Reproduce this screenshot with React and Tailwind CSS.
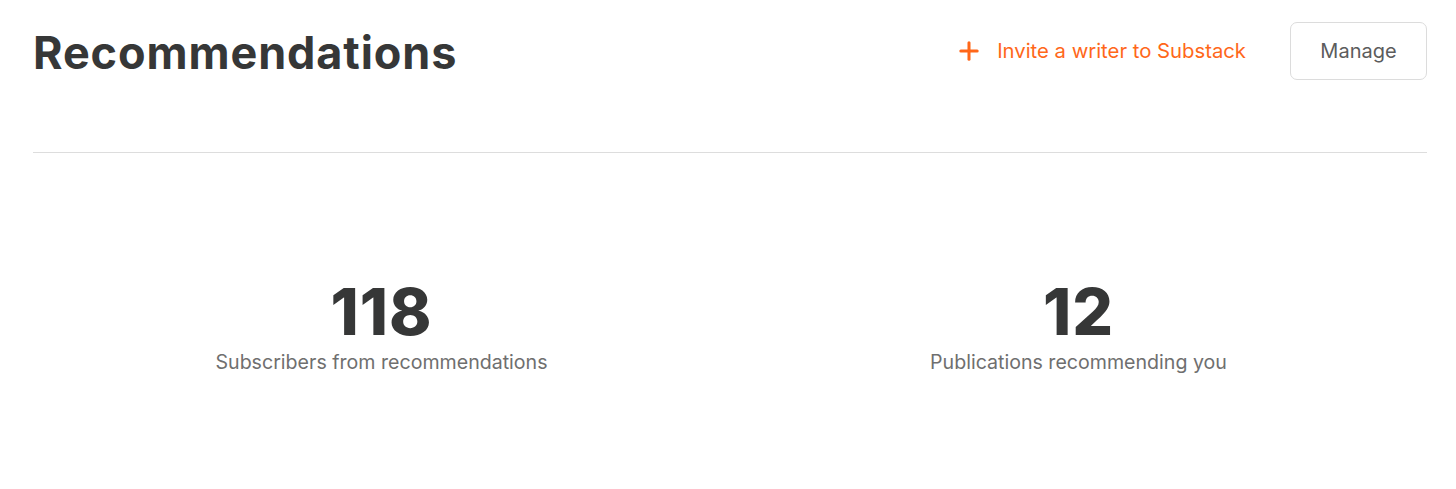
import { Plus } from 'lucide-react'

function Stat({ value, label }) {
  return (
    <div className="flex flex-col items-center">
      <div className="text-[64px] font-extrabold leading-[72px] tracking-[1px] text-[#363737]">{value}</div>
      <div className="mt-[1px] text-[19.6px] leading-[26px] text-[#6f6f6f]">{label}</div>
    </div>
  )
}

export default function App() {
  return (
    <div className="min-h-[489px] bg-white pl-[33px] pr-[29px] pt-[22px] font-['Inter',sans-serif] text-[#363737]">
      <div className="flex items-start justify-between">
        <h1 className="text-[45px] font-bold leading-[62px] tracking-[0.9px]">Recommendations</h1>
        <div className="flex items-center">
          <button className="flex items-center text-[20.3px] text-[#ff6719]">
            <Plus size={28} strokeWidth={2.6} className="mr-[14px]" />
            Invite a writer to Substack
          </button>
          <button className="ml-[44px] h-[58px] w-[137px] rounded-[7px] border border-[#dcdcdc] text-[20px] text-[#5c5c5c]">
            Manage
          </button>
        </div>
      </div>
      <div className="mt-[68px] border-t border-[#dddddd]" />
      <div className="grid grid-cols-2 pt-[123px]">
        <Stat value="118" label="Subscribers from recommendations" />
        <Stat value="12" label="Publications recommending you" />
      </div>
    </div>
  )
}
